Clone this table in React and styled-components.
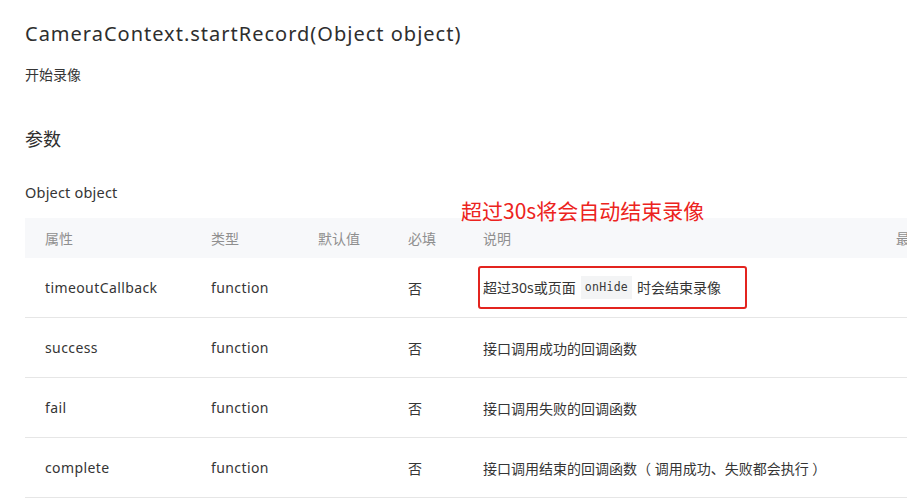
import React from "react";
import styled, { createGlobalStyle } from "styled-components";

const Global = createGlobalStyle`
  html, body { margin: 0; padding: 0; background: #fff; overflow: hidden; }
  body { font-family: "Noto Sans", "Noto Sans CJK SC", sans-serif; color: #353535; }
`;

const Page = styled.div`
  position: relative;
  padding: 20px 0 0 25px;
  width: 1200px;
`;

const Title = styled.h1`
  margin: 0;
  font-size: 20px;
  line-height: 28px;
  font-weight: 400;
  letter-spacing: 1px;
  color: #2e2e2e;
`;

const Desc = styled.p`
  margin: 17px 0 0;
  font-size: 14px;
  line-height: 20px;
`;

const SectionTitle = styled.h2`
  margin: 41px 0 0;
  font-size: 18px;
  line-height: 26px;
  font-weight: 400;
  color: #2e2e2e;
`;

const SubTitle = styled.h3`
  margin: 30px 0 0;
  font-size: 14.5px;
  line-height: 20px;
  font-weight: 400;
  letter-spacing: 0.2px;
  color: #353535;
`;

const Table = styled.div`
  margin-top: 16px;
  width: 1100px;
`;

const Row = styled.div`
  display: grid;
  grid-template-columns: 166px 107px 90px 75px 413px 1fr;
  align-items: center;
  height: ${(p) => (p.$head ? "40px" : "59px")};
  background: ${(p) => (p.$head ? "#f7f8fa" : "#fff")};
  border-bottom: ${(p) => (p.$head ? "none" : "1px solid #e6e6e6")};
  font-size: 14px;
  letter-spacing: ${(p) => (p.$head ? "0" : "0.4px")};
  color: ${(p) => (p.$head ? "#8f8f8f" : "#353535")};
`;

const Cell = styled.div`
  padding-left: 20px;
  white-space: nowrap;
  letter-spacing: ${(p) => (p.$cjk ? "0" : "inherit")};
`;

const Highlight = styled.span`
  display: inline-flex;
  align-items: center;
  margin-left: -5px;
  padding: 8px 24px 8px 3px;
  border: 2px solid #e3241f;
  border-radius: 3px;
  line-height: 20px;
`;

const Code = styled.code`
  font-family: "DejaVu Sans Mono", "Liberation Mono", monospace;
  font-size: 11.5px;
  background: #f3f4f5;
  color: #3a3a3a;
  padding: 3px 4px;
  margin: 0 5px;
  line-height: 17px;
  letter-spacing: 0.3px;
`;

const Note = styled.div`
  position: absolute;
  left: 461px;
  top: 196px;
  font-size: 21px;
  line-height: 28px;
  color: #ec2320;
  font-family: "Noto Sans CJK SC", "Noto Sans", sans-serif;
`;

const rows = [
  ["success", "接口调用成功的回调函数"],
  ["fail", "接口调用失败的回调函数"],
  ["complete", "接口调用结束的回调函数（ 调用成功、失败都会执行 ）"],
];

export default function App() {
  return (
    <>
      <Global />
      <Page>
        <Title>CameraContext.startRecord(Object object)</Title>
        <Desc>开始录像</Desc>
        <SectionTitle>参数</SectionTitle>
        <SubTitle>Object object</SubTitle>
        <Table>
          <Row $head>
            <Cell>属性</Cell>
            <Cell>类型</Cell>
            <Cell>默认值</Cell>
            <Cell>必填</Cell>
            <Cell>说明</Cell>
            <Cell>最低版本</Cell>
          </Row>
          <Row>
            <Cell>timeoutCallback</Cell>
            <Cell>function</Cell>
            <Cell></Cell>
            <Cell $cjk>否</Cell>
            <Cell $cjk>
              <Highlight>
                超过30s或页面<Code>onHide</Code>时会结束录像
              </Highlight>
            </Cell>
            <Cell></Cell>
          </Row>
          {rows.map(([name, desc]) => (
            <Row key={name}>
              <Cell>{name}</Cell>
              <Cell>function</Cell>
              <Cell></Cell>
              <Cell $cjk>否</Cell>
              <Cell $cjk>{desc}</Cell>
              <Cell></Cell>
            </Row>
          ))}
        </Table>
        <Note>超过30s将会自动结束录像</Note>
      </Page>
    </>
  );
}
